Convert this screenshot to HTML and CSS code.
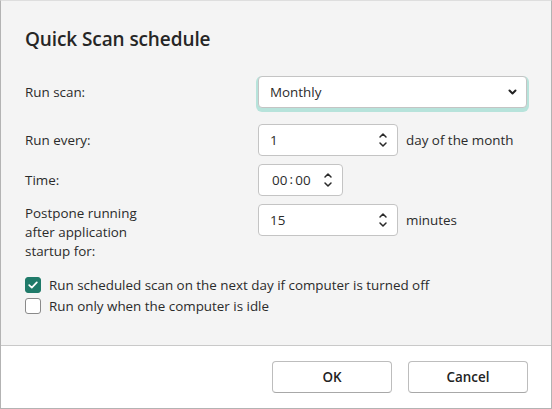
FILE: index.html
```html
<!DOCTYPE html>
<html lang="en">
<head>
<meta charset="utf-8">
<title>Quick Scan schedule</title>
<link rel="stylesheet" href="styles.css">
</head>
<body>
<div class="dialog">
  <div class="content">
    <h1 class="title">Quick Scan schedule</h1>
    <div class="form">
      <div class="label center">Run scan:</div>
      <div class="ctrl ctrl-select">
        <div class="select">
          <span>Monthly</span>
          <svg class="chev" width="9" height="6" viewBox="0 0 9 6"><path d="M1.5 1.5 L4.5 4.5 L7.5 1.5" fill="none" stroke="#222" stroke-width="2" stroke-linecap="round" stroke-linejoin="round"/></svg>
        </div>
      </div>

      <div class="label center gap-lg">Run every:</div>
      <div class="ctrl gap-lg">
        <div class="spin wide"><span>1</span>
          <svg class="arrows" width="10" height="16" viewBox="0 0 10 16"><path d="M2 5 L5 2 L8 5 M2 11 L5 14 L8 11" fill="none" stroke="#2a2a2a" stroke-width="1.5" stroke-linecap="round" stroke-linejoin="round"/></svg>
        </div>
        <span class="suffix">day of the month</span>
      </div>

      <div class="label center gap-sm">Time:</div>
      <div class="ctrl gap-sm">
        <div class="spin time"><span class="tval">00<span class="colon">:</span>00</span>
          <svg class="arrows" width="10" height="16" viewBox="0 0 10 16"><path d="M2 5 L5 2 L8 5 M2 11 L5 14 L8 11" fill="none" stroke="#2a2a2a" stroke-width="1.5" stroke-linecap="round" stroke-linejoin="round"/></svg>
        </div>
      </div>

      <div class="label top gap-sm">Postpone running<br>after application<br>startup for:</div>
      <div class="ctrl top gap-sm">
        <div class="spin wide"><span>15</span>
          <svg class="arrows" width="10" height="16" viewBox="0 0 10 16"><path d="M2 5 L5 2 L8 5 M2 11 L5 14 L8 11" fill="none" stroke="#2a2a2a" stroke-width="1.5" stroke-linecap="round" stroke-linejoin="round"/></svg>
        </div>
        <span class="suffix">minutes</span>
      </div>
    </div>

    <div class="checks">
      <div class="check">
        <span class="box checked"><svg width="10" height="8" viewBox="0 0 10 8"><path d="M1.2 4.2 L3.8 6.6 L8.8 1.4" fill="none" stroke="#fff" stroke-width="1.7" stroke-linecap="round" stroke-linejoin="round"/></svg></span>
        <span>Run scheduled scan on the next day if computer is turned off</span>
      </div>
      <div class="check">
        <span class="box"></span>
        <span>Run only when the computer is idle</span>
      </div>
    </div>
  </div>
  <div class="footer">
    <button class="btn">OK</button>
    <button class="btn">Cancel</button>
  </div>
</div>
</body>
</html>
```

FILE: styles.css
```css
* { box-sizing: border-box; }
html, body { margin: 0; padding: 0; background: #ffffff; }
body {
  font-family: "Open Sans", "Noto Sans", "Liberation Sans", sans-serif;
  font-size: 13.4px;
  color: #2b2b2b;
}
.dialog {
  width: 552px;
  height: 409px;
  display: flex;
  flex-direction: column;
  border: 1px solid #b3b3b3;
  border-top-color: #dedede;
}
.content {
  flex: 1;
  background: #f4f4f4;
  padding: 24px 24px 0 24px;
}
.title {
  margin: 0;
  font-size: 19px;
  font-weight: 600;
  line-height: 28px;
  color: #262626;
  letter-spacing: -0.1px;
}
.form {
  display: grid;
  grid-template-columns: 233px 1fr;
  margin-top: 23px;
}
.label { line-height: 19px; }
.label.center { align-self: center; }
.label.top { align-self: start; }
.gap-lg { margin-top: 16px; }
.gap-sm { margin-top: 8px; }
.ctrl {
  display: flex;
  align-items: center;
  gap: 8px;
}
.ctrl.top { align-items: flex-start; }
.ctrl.top .suffix { line-height: 32px; }
.select {
  width: 269px;
  height: 32px;
  background: #fff;
  border: 1px solid #c4c4c4;
  border-radius: 4px;
  display: flex;
  align-items: center;
  justify-content: space-between;
  padding: 0 9px 0 11px;
  box-shadow: 0 2px 0 2px #b7e3db;
}
.spin {
  height: 32px;
  background: #fff;
  border: 1px solid #c4c4c4;
  border-radius: 4px;
  display: flex;
  align-items: center;
  justify-content: space-between;
  padding: 0 9px 0 11px;
}
.spin.wide { width: 140px; }
.spin.time { width: 85px; padding-left: 13px; }
.tval { letter-spacing: 0.1px; }
.colon { margin: 0 2px; position: relative; top: -1px; }
.checks {
  margin-top: 14px;
  display: flex;
  flex-direction: column;
  gap: 2px;
}
.check {
  display: flex;
  align-items: center;
  gap: 8px;
  height: 19px;
}
.box {
  width: 16px;
  height: 16px;
  border: 1px solid #8a8a8a;
  border-radius: 3px;
  background: #fff;
  display: flex;
  align-items: center;
  justify-content: center;
  flex: none;
}
.box.checked {
  background: #1f7a69;
  border-color: #1f7a69;
}
.footer {
  background: #fff;
  border-top: 1px solid #c9c9c9;
  padding: 15px 23px 15px 0;
  display: flex;
  justify-content: flex-end;
  gap: 16px;
}
.btn {
  width: 120px;
  height: 32px;
  background: #fff;
  border: 1px solid #bdbdbd;
  border-bottom-color: #a8a8a8;
  border-radius: 4px;
  font-family: inherit;
  font-size: 13.4px;
  font-weight: 600;
  color: #222;
  padding: 0;
}
```
